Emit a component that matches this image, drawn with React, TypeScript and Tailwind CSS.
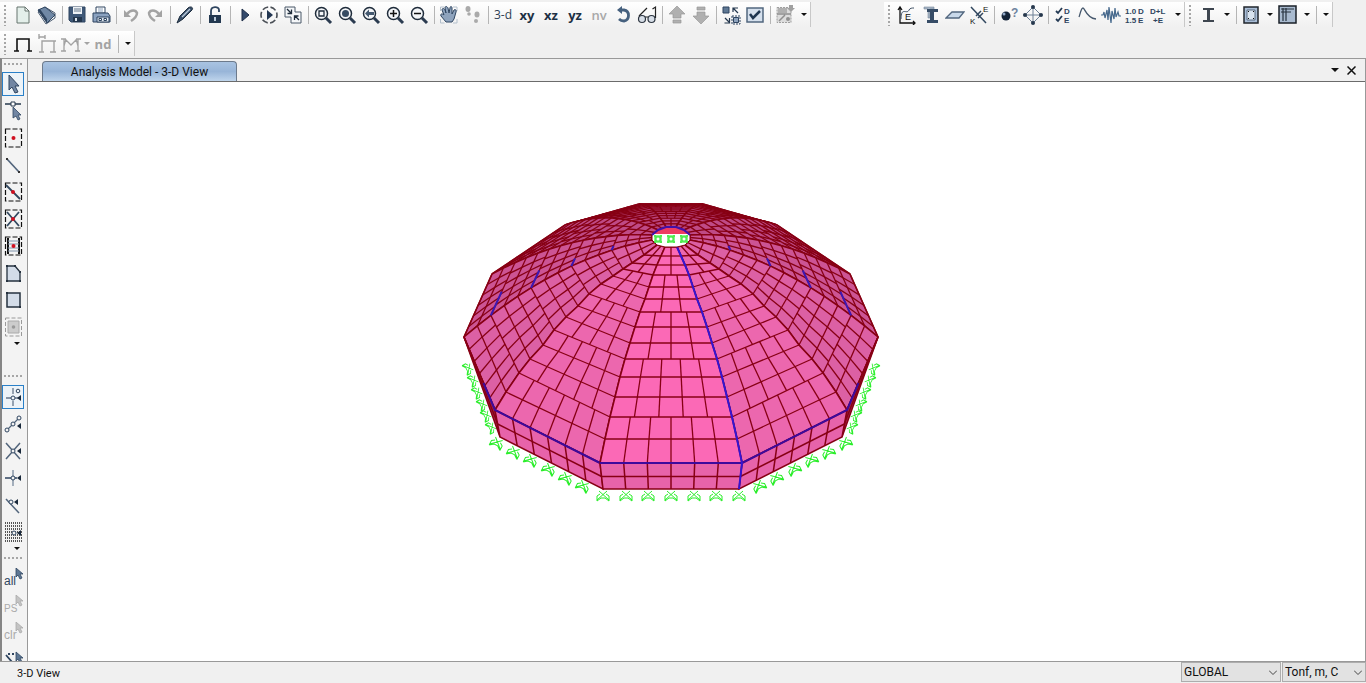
import { clsx } from "clsx";
import type { ReactNode } from "react";

const NAVY = "#2f4560";
const STEEL = "#8ea3bd";
const GRAY = "#a3a3a3";

const magnifier = (inner: ReactNode) => (
  <>
    <path d="M13 13l5 5" stroke="#2b3b50" strokeWidth="3" />
    <circle cx="8.5" cy="8.5" r="6" fill="#f4f6f9" stroke="#1f2c3b" strokeWidth="1.5" />
    {inner}
  </>
);

const pointer = (x: number, y: number, fill: string) => (
  <path d={`M${x} ${y}v9l2-2 2 4 2-1-2-4h3z`} fill={fill} stroke={fill === "#c4c4c4" ? "#aaa" : NAVY} strokeWidth="0.8" />
);

const dashedBox = (
  <rect x="2.5" y="1" width="16" height="18" stroke="#111" strokeWidth="1.2" strokeDasharray="5 2" />
);

const icons: Record<string, ReactNode> = {
  new: (
    <path d="M4 2h8l4 4v12H4zM12 2v4h4" fill="#e4efea" stroke="#66756f" />
  ),
  open: (
    <>
      <path d="M8 2l10 6v5l-9 6-8-12z" fill="#fff" stroke="#45566c" />
      <path d="M8 2l10 8-8 8L1 5z" fill="#7088a5" stroke={NAVY} />
      <path d="M1 5l9 13v-4L3 4z" fill={NAVY} />
    </>
  ),
  save: (
    <>
      <path d="M2 2h16v15H4l-2-2z" fill="#3f5878" stroke={NAVY} />
      <path d="M6 2h9v7H6z" fill="#eef2f6" />
      <path d="M7 4h7M7 6h7" stroke="#66788c" />
      <path d="M6 12h9v5H6z" fill="#23364d" />
      <path d="M8 13h2v3H8z" fill="#dde4ec" />
    </>
  ),
  print: (
    <>
      <path d="M5 2h9v6H5z" fill="#fff" stroke={NAVY} />
      <path d="M7 4h5M7 6h5" stroke={STEEL} />
      <path d="M2 8h15l2 3v6H2z" fill="#8ba2c0" stroke={NAVY} />
      <path d="M6 12h12v5H6z" fill="#dfe7f0" stroke={NAVY} />
      <path d="M8 13.500h2.500v2H8zM13 13.500h2.500v2H13z" fill="#fff" stroke={NAVY} />
    </>
  ),
  undo: (
    <>
      <path d="M6 9c4-5 9-4 10-1 0 4-3 6-6 8" stroke={GRAY} strokeWidth="2.500" />
      <path d="M3 5v7h7z" fill={GRAY} />
    </>
  ),
  redo: (
    <>
      <path d="M14 9C10 4 5 5 4 8c0 4 3 6 6 8" stroke={GRAY} strokeWidth="2.500" />
      <path d="M17 5v7h-7z" fill={GRAY} />
    </>
  ),
  pen: (
    <>
      <path d="M2 18L5 11 13 3c2-2 6-1 4 2l-9 9z" fill="#384e68" stroke="#1d2c3d" />
      <path d="M7 12l8-8" stroke="#b8c8da" strokeWidth="1.5" />
    </>
  ),
  lock: (
    <>
      <path d="M6 10V6c0-5 8-5 8-1v2" stroke={NAVY} strokeWidth="1.8" />
      <path d="M4 10h12v8H4z" fill="#233850" />
      <path d="M10 12v4" stroke="#b9c8d8" strokeWidth="2" />
    </>
  ),
  play: <path d="M7 4l7 6-7 6z" fill="#33496b" stroke="#1f2f48" />,
  playRing: (
    <>
      <circle cx="10" cy="10" r="8" stroke="#4a4f56" strokeWidth="1.6" strokeDasharray="6 2.400" strokeDashoffset="3" />
      <path d="M8 5l6 5-6 5z" fill="#233752" />
    </>
  ),
  shrink: (
    <>
      <path d="M2 2h10v5h6v11H8v-6H2z" stroke="#4a5868" fill="#f5f7f9" />
      <path d="M4 4l4 4M8.500 4.500v4h-4M16 15l-4-4M11.500 15v-4h4" stroke="#1f2c3b" strokeWidth="1.3" />
    </>
  ),
  zoomBox: magnifier(<path d="M6 6h5v5H6z" stroke="#1f2c3b" strokeWidth="1.3" />),
  zoomAll: magnifier(<circle cx="8.500" cy="8.500" r="3.500" fill="#364b62" />),
  zoomPrev: magnifier(<path d="M4 8.500l4-4v2.500h5v3H8v2.500z" fill="#43586f" />),
  zoomIn: magnifier(<path d="M5 8.500h7M8.500 5v7" stroke="#111" strokeWidth="1.500" />),
  zoomOut: magnifier(<path d="M5 8.500h7" stroke="#111" strokeWidth="1.500" />),
  pan: (
    <>
      <path d="M1.500 6V2h4M14 2h4v4M18 14v4h-4M5.500 18h-4v-4" stroke="#b4c0cc" />
      <path d="M7 17L2 11c-1-2 1-3 3-1L3 5c0-2 2-2 3 0l1 3-1-5c0-2 2-2 3 0l1 5 1-5c0-2 2-2 2 0v6l2-4c1-1 3 0 2 2l-2 7-2 3z" fill={STEEL} stroke={NAVY} />
    </>
  ),
  walk: (
    <g fill="#aaa">
      <ellipse cx="5" cy="4" rx="2.500" ry="3" />
      <circle cx="6" cy="9" r="1.800" />
      <ellipse cx="14" cy="9.500" rx="2.500" ry="3" />
      <circle cx="13" cy="16" r="2" />
    </g>
  ),
  rotate: (
    <>
      <path d="M8 5h3c6 1 6 10 0 11-2 0-4-1-5-2" stroke="#45607e" strokeWidth="2.800" />
      <path d="M4 5l5-4v8z" fill="#45607e" />
    </>
  ),
  glasses: (
    <>
      <path d="M2 11L10 3M18.500 13V2l-3 2M8 12h3" stroke="#222" strokeWidth="1.200" />
      <circle cx="5" cy="14" r="3.500" fill="#d7dee7" stroke="#2c3540" strokeWidth="1.200" />
      <circle cx="14.500" cy="14" r="3.500" fill="#d7dee7" stroke="#2c3540" strokeWidth="1.200" />
    </>
  ),
  up: <path d="M10 1l8 8h-4v4H6V9H2zM6 15h8v3H6z" fill="#b0b0b0" stroke="#999" strokeWidth=".7" />,
  down: <path d="M10 19l8-8h-4V7H6v4H2zM6 2h8v3H6z" fill="#b0b0b0" stroke="#999" strokeWidth=".7" />,
  swap: (
    <>
      <path d="M2 2h6v6H2z" fill="#5f7894" stroke={NAVY} />
      <path d="M12.500 12.500h5v5h-5z" fill={STEEL} stroke={NAVY} />
      <path d="M17 8l-5-5M12 7V3h5M4 13l4 4M8.500 13v5h-5" stroke="#23364d" strokeWidth="1.200" />
      <path d="M11 11h8v8h-8z" stroke={NAVY} strokeDasharray="2 1" />
    </>
  ),
  check: (
    <>
      <path d="M2 3h16v14H2z" fill="#d5e0ed" stroke="#52677f" strokeWidth="1.500" />
      <path d="M5 9l3 4 7-7" stroke="#1e3550" strokeWidth="2.500" />
    </>
  ),
  assign: (
    <>
      <path d="M2 2.500h14v15H2z" fill="#dcdcdc" stroke="#a0a0a0" strokeDasharray="2 1" />
      <path d="M3 3h9v5H3z" fill="#b0b0b0" />
      <path d="M2 9h14M4 16l6-6" stroke="#8f8f8f" strokeWidth="1.500" />
      <path d="M12 3h8l-4 4zM14 0h4v3h-4z" fill="#a0a0a0" />
      <circle cx="13" cy="14" r="2" fill="#909090" />
    </>
  ),
  modulus: (
    <>
      <path d="M3 3v15h15M1 5l2-3 2 3M16 16l2 2-2 2" stroke="#111" strokeWidth="1.300" />
      <path d="M4 14c0-13 6-4 8-9 1-2 3-2 5-2" stroke="#3f5064" />
      <text x="8" y="15" fontSize="9" fill="#111">E</text>
    </>
  ),
  section: (
    <>
      <path d="M3 2h10v2H9v9H7V4H3z" fill="#a9b7c7" stroke="#75869a" strokeWidth=".6" />
      <path d="M6 4h11v3h-4v8h4v3H6v-3h3V7H6z" fill="#364c66" />
    </>
  ),
  slab: <path d="M1 13l6-6h12l-5 6z" fill="#c9d9ea" stroke="#52677f" strokeWidth="1.300" />,
  link: (
    <>
      <path d="M2 2l15 16M7 11l5-5M9 13l5-5" stroke="#32485f" strokeWidth="1.500" />
      <text x="14" y="7" fontSize="8" fill="#111">E</text>
      <text x="1" y="19" fontSize="8" fill="#111">K</text>
    </>
  ),
  jointQ: (
    <>
      <circle cx="7" cy="11" r="4.500" fill="#142438" />
      <circle cx="5" cy="9" r="1.500" fill="#91a9c8" />
      <text x="12" y="12" fontSize="12" fontWeight="bold" fill="#6f84a0">?</text>
    </>
  ),
  nodes: (
    <>
      <path d="M10 2l8 8-8 8-8-8zM10 2v16M2 10h16" stroke="#6e8197" />
      <g fill="#26384d">
        <circle cx="10" cy="2" r="2" />
        <circle cx="18" cy="10" r="2" />
        <circle cx="10" cy="18" r="2" />
        <circle cx="2" cy="10" r="2" />
      </g>
    </>
  ),
  loadPattern: (
    <>
      <path d="M3 6l2 2 4-5M3 14l2 2 4-5" stroke="#243a54" strokeWidth="1.800" />
      <text x="11" y="9" fontSize="8" fontWeight="bold" fill={NAVY}>D</text>
      <text x="11" y="18" fontSize="8" fontWeight="bold" fill={NAVY}>E</text>
    </>
  ),
  spectrum: <path d="M2 12c1-2 2-9 4-9s3 10 13 11" stroke="#45576c" strokeWidth="1.300" />,
  history: <path d="M0 10h2l1-3 1 6 2-8 1 10 1-13 2 16 1-12 2 8 1-11 1 9 2-5 1 4h3" stroke="#45688c" strokeWidth="1.200" />,
  cases: (
    <g fontSize="8" fontWeight="bold" fill={NAVY}>
      <text x="0" y="9">1.0</text>
      <text x="13" y="9">D</text>
      <text x="0" y="18">1.5</text>
      <text x="13" y="18">E</text>
    </g>
  ),
  combos: (
    <g fontSize="8" fontWeight="bold" fill={NAVY}>
      <text x="1" y="9">D+L</text>
      <text x="4" y="18">+E</text>
    </g>
  ),
  beam: <path d="M5 3h11v2h-4v10h4v2H5v-2h4V5H5z" fill="#3e4650" />,
  column: (
    <>
      <path d="M3 2h14v16H3z" fill="#a9bdd6" stroke="#20262d" strokeWidth="1.500" />
      <path d="M6 5h8v10H6z" fill="#d8e3ef" stroke="#45566c" strokeWidth=".8" />
      <path d="M7 6h1v1H7zM12 6h1v1h-1zM7 13h1v1H7zM12 13h1v1h-1z" fill="#111" />
    </>
  ),
  table: (
    <>
      <path d="M1 1h17v17H1z" fill="#a8bacf" stroke="#1a2028" strokeWidth="1.500" />
      <path d="M3 4h13M3 7h10M5 3v13M8 3v13" stroke="#26323f" strokeWidth="1.200" />
    </>
  ),
  frame: <path d="M4 17V5h12v12M1 17h5M14 17h5" stroke="#111" strokeWidth="1.600" />,
  frameLoad: <path d="M2 0v5M2 3h6M8 1v4M5 18V7h12v11M2 18h5M13 18h6M5 7h14" stroke={GRAY} strokeWidth="1.400" />,
  frameShape: <path d="M0 5h5M15 5h5M3 5v12M17 5v12M4 5l6 6 6-6M0 17h5M14 17h5M5 5l-2 7M15 5l2 7" stroke={GRAY} strokeWidth="1.300" />,
  select: <path d="M6 1v15l3-3 3 6 3-1-3-6h4z" fill="#7186a3" stroke={NAVY} />,
  reshape: (
    <>
      <path d="M2 3h16" stroke="#26384d" strokeWidth="1.500" />
      <path d="M8 1h4v4H8z" fill="#fff" stroke="#26384d" />
      <path d="M10 6v11l3-2 2 4 2-1-2-4h3z" fill="#7186a3" stroke={NAVY} strokeWidth=".8" />
    </>
  ),
  point: (
    <>
      {dashedBox}
      <circle cx="10.500" cy="10" r="2" fill="#d01020" />
    </>
  ),
  line: (
    <>
      <path d="M4 4l12 13" stroke="#52657c" strokeWidth="1.700" />
      <path d="M3 3h2v2H3zM15 16h2v2h-2z" fill="#333" />
    </>
  ),
  quickLine: (
    <>
      {dashedBox}
      <path d="M3 3l14 14" stroke="#32485f" strokeWidth="1.800" />
      <circle cx="10" cy="10" r="2" fill="#d01020" />
    </>
  ),
  brace: (
    <>
      {dashedBox}
      <path d="M4 3l12 14M16 3L4 17" stroke="#32485f" strokeWidth="1.800" />
      <circle cx="10" cy="10" r="2" fill="#d01020" />
    </>
  ),
  secondary: (
    <>
      {dashedBox}
      <path d="M5 2v16M16 2v16" stroke="#111" strokeWidth="2" />
      <path d="M5 5h11M5 8h11M5 12h11M5 15h11" stroke="#8094ab" />
      <circle cx="10.500" cy="10" r="2" fill="#d01020" />
    </>
  ),
  poly: (
    <>
      <path d="M4 3h8l5 6v9H4z" fill="#d3dce8" stroke="#26323f" strokeWidth="1.300" />
      <path d="M3 2h2v2H3zM11 2h2v2h-2zM16 8h2v2h-2zM3 17h2v2H3zM16 17h2v2h-2z" fill="#26323f" />
    </>
  ),
  rect: (
    <>
      <path d="M4 3h13v14H4z" fill="#d3dce8" stroke="#26323f" strokeWidth="1.500" />
      <path d="M3 2h2v2H3zM16 16h2v2h-2z" fill="#26323f" />
    </>
  ),
  quickArea: (
    <>
      <rect x="2.500" y="1" width="16" height="18" stroke="#999" strokeDasharray="4 2" />
      <path d="M5 4h11v12H5z" fill="#ccc" stroke="#aaa" />
      <circle cx="10.500" cy="10" r="1.800" fill="#999" />
    </>
  ),
  snapPoint: (
    <>
      <path d="M10 1v6M10 14v5M3 11h5M12 11h3" stroke="#65768a" strokeWidth="1.300" />
      <circle cx="10" cy="11" r="2" stroke={NAVY} />
      <circle cx="15" cy="4" r="1.800" stroke={NAVY} />
      <path d="M18 8v6l-4-3z" fill="#18283b" />
    </>
  ),
  snapEnds: (
    <>
      <path d="M4 16L16 4" stroke="#52657c" strokeWidth="1.200" />
      <g fill="#f3f3f3" stroke={NAVY}>
        <circle cx="4" cy="16" r="2" />
        <circle cx="10" cy="10" r="2" />
        <circle cx="16" cy="4" r="2" />
      </g>
      <path d="M18 9v6l-4-3z" fill="#18283b" />
    </>
  ),
  snapCross: (
    <>
      <path d="M3 2l14 16M17 2L3 18" stroke="#52657c" strokeWidth="1.500" />
      <circle cx="10" cy="10" r="2" fill="#f3f3f3" stroke={NAVY} />
      <path d="M18 7v6l-4-3z" fill="#18283b" />
    </>
  ),
  snapPerp: (
    <>
      <path d="M10 2v16" stroke="#8997a8" strokeWidth="1.500" />
      <path d="M2 10h12" stroke={NAVY} strokeWidth="1.500" />
      <circle cx="10" cy="10" r="2" fill="#f3f3f3" stroke={NAVY} />
      <path d="M18 7v6l-4-3z" fill="#18283b" />
    </>
  ),
  snapLine: (
    <>
      <path d="M3 4l13 14" stroke="#52657c" strokeWidth="1.500" />
      <circle cx="8" cy="7" r="2" fill="#f3f3f3" stroke={NAVY} />
      <path d="M15 4v6l-4-3z" fill="#18283b" />
    </>
  ),
  snapGrid: (
    <>
      <path d="M2 1h17M2 4h17M2 7h17M2 10h17M2 13h17M2 16h17M2 19h17" stroke="#222" strokeWidth="1.300" strokeDasharray="1 1" />
      <circle cx="11" cy="11" r="2" fill="#f3f3f3" stroke={NAVY} />
      <path d="M18 8v6l-4-3z" fill="#18283b" />
    </>
  ),
  all: (
    <>
      <text x="1" y="17" fontSize="12" fill={NAVY}>all</text>
      {pointer(13, 0, "#5f7894")}
    </>
  ),
  ps: (
    <>
      <text x="1" y="17" fontSize="10" fill="#aaa">PS</text>
      {pointer(13, 0, "#c4c4c4")}
    </>
  ),
  clr: (
    <>
      <text x="1" y="17" fontSize="12" fill="#aaa">clr</text>
      {pointer(13, 0, "#c4c4c4")}
    </>
  ),
  selectLine: (
    <>
      <path d="M3 6l6 7M11 5H9M7 5H5" stroke={NAVY} strokeWidth="1.800" />
      {pointer(13, 3, "#5f7894")}
    </>
  ),
};

function Icon({ name }: { name: string }) {
  return (
    <svg viewBox="0 0 20 20" className="size-5 shrink-0 font-['Liberation_Sans',sans-serif]" fill="none" aria-hidden="true">
      {icons[name]}
    </svg>
  );
}

function Caret({ fill = "#111" }: { fill?: string }) {
  return (
    <svg viewBox="0 0 6 3" className="h-[3px] w-1.5" aria-hidden="true">
      <path d="M0 0h6L3 3z" fill={fill} />
    </svg>
  );
}

// A row or column of small square dots, used as a drag handle
function Grip({ vertical = false }: { vertical?: boolean }) {
  return vertical ? (
    <svg className="mr-px ml-1 h-[22px] w-1.5" aria-hidden="true">
      <line x1="1" y1="1" x2="1" y2="22" stroke="#a6a6a6" strokeWidth="2" strokeDasharray="2 2" />
    </svg>
  ) : (
    <svg className="h-[3px] w-full shrink-0" aria-hidden="true">
      <line x1="2" y1="1" x2="22" y2="1" stroke="#a6a6a6" strokeWidth="2" strokeDasharray="2 2" />
    </svg>
  );
}

const textTools: Record<string, string> = {
  "3-d": "text-[12px] text-[#2d3f55]",
  xy: "text-[13px] font-bold text-[#1e3145]",
  xz: "text-[13px] font-bold text-[#1e3145]",
  yz: "text-[13px] font-bold text-[#1e3145]",
  nv: "text-[13px] font-semibold text-[#a8a8a8]",
  nd: "text-[13px] font-bold text-[#a3a3a3]",
};

function Tool({ name }: { name: string }) {
  if (name === "|") {
    return <span className="flex w-1.5 justify-center"><span className="h-[18px] w-px bg-[#b5b5b5]" /></span>;
  }
  if (name === "v" || name === "v-disabled") {
    return (
      <button
        type="button"
        aria-label="More options"
        className={clsx("flex h-5 items-center justify-center", name === "v" ? "w-[13px]" : "w-2")}
      >
        <Caret fill={name === "v" ? "#111" : GRAY} />
      </button>
    );
  }
  return (
    <button type="button" aria-label={name} className="flex h-[22px] w-6 items-center justify-center">
      {name in textTools ? (
        <span className={clsx("font-['Open_Sans',sans-serif] leading-4 whitespace-nowrap", textTools[name])}>
          {name}
        </span>
      ) : (
        <Icon name={name} />
      )}
    </button>
  );
}

function ToolGroup({ tools }: { tools: string }) {
  return (
    <div role="toolbar" className="flex h-[25px] items-center border-r border-[#c8c8c8] bg-linear-to-b from-white to-[#f0f0f0]">
      <Grip vertical />
      {tools.split(" ").map((tool, i) => (
        <Tool key={i} name={tool} />
      ))}
    </div>
  );
}

function RailGroup({ tools, selected }: { tools: string[]; selected?: string }) {
  return (
    <div className="flex shrink-0 flex-col items-center">
      {tools.map((tool) => (
        <div key={tool} className="flex h-[27px] items-center">
          <button
            type="button"
            aria-label={tool}
            className={clsx(
              "flex h-6 w-[22px] items-center justify-center border",
              tool === selected ? "border-[#2a80c8] bg-[#edf3f8]" : "border-transparent",
            )}
          >
            <Icon name={tool} />
          </button>
        </div>
      ))}
    </div>
  );
}

type Point = [number, number];

const CENTER = 671;
const ROWS = 14;
const frontX = [6, 10, 14, 18, 22, 26, 31, 36, 41, 46, 51, 56, 61, 66, 71];
const frontY = [247, 256, 265, 275, 287, 299, 312, 327, 343, 359, 377, 397, 417, 439, 463];
const secondX = [14, 27, 39, 48, 58, 70, 82, 93, 105, 117, 128, 141, 152, 165, 176];
const secondY = [245, 255, 263, 269, 276, 284, 294, 306, 317, 330, 345, 359, 373, 392, 410];

const lerp = (a: Point, b: Point, t: number): Point => [
  a[0] + (b[0] - a[0]) * t,
  a[1] + (b[1] - a[1]) * t,
];
const curve = (fn: (t: number) => Point) =>
  Array.from({ length: ROWS + 1 }, (_, i) => fn(i / ROWS));

// Half of the ridges, front to back, as offsets from the dome's axis
const ridges: Point[][] = [
  frontX.map((x, i) => [x, frontY[i]] as Point),
  secondX.map((x, i) => [x, secondY[i]] as Point),
  curve((t) => [19 + 188 * t, 240 + 34 * t + 63 * t * t]),
  curve((t) => [19 + 160 * t, 235 - 8 * t + 47 * t * t]),
  curve((t) => [13 + 93 * t, 230 - 43 * t + 38 * t * t]),
  curve((t) => [5 + 27 * t, 204 + 23 * (1 - t) * (1 - t)]),
];

const base: Point[] = [[68, 489], [171, 437], [198, 366]];

const place = ([x, y]: Point, side: number): Point => [CENTER + side * x, y];
const poly = (pts: Point[]) => pts.map((p) => p.map((n) => Math.round(n * 10) / 10).join(",")).join(" ");

// The mesh gets one more division across each panel every three rows
const divisions = (row: number) => Math.min(6, 2 + Math.floor(row / 3));

function Panel({ a, b, fill }: { a: Point[]; b: Point[]; fill: string }) {
  const lines: ReactNode[] = [];
  for (let row = 0; row < ROWS; row++) {
    const n = divisions(row);
    lines.push(<polyline key={`r${row}`} points={poly([a[row + 1], b[row + 1]])} />);
    for (let k = 1; k < n; k++) {
      lines.push(
        <polyline key={`${row}-${k}`} points={poly([lerp(a[row], b[row], k / n), lerp(a[row + 1], b[row + 1], k / n)])} />,
      );
    }
  }
  return (
    <g stroke="#870014" strokeWidth="1.3">
      <polygon points={poly([...a, ...[...b].reverse()])} fill={fill} strokeWidth="1.6" />
      {lines}
    </g>
  );
}

function Wall({ top, bottom }: { top: [Point, Point]; bottom: [Point, Point] }) {
  return (
    <g stroke="#870014" strokeWidth="1.5">
      <polygon points={poly([top[0], top[1], bottom[1], bottom[0]])} fill="#e763aa" />
      <polyline points={poly([lerp(top[0], bottom[0], 0.52), lerp(top[1], bottom[1], 0.52)])} />
      {[1, 2, 3, 4, 5].map((k) => (
        <polyline key={k} points={poly([lerp(top[0], top[1], k / 6), lerp(bottom[0], bottom[1], k / 6)])} />
      ))}
    </g>
  );
}

interface SupportsProps {
  from: Point;
  to: Point;
  angle: number;
  scale?: string;
  skip?: number;
}

function Supports({ from, to, angle, scale = "1 1", skip = 0 }: SupportsProps) {
  return (
    <g stroke="#2bee2b">
      {Array.from({ length: 7 - skip }, (_, i) => {
        const [x, y] = lerp(from, to, (i + skip) / 6);
        return (
          <path
            key={i}
            transform={`translate(${Math.round(x)} ${Math.round(y)}) rotate(${angle}) scale(${scale})`}
            d="M-4 2L6 11M4 2L-6 11M-6 12V7l3-2M6 12V7L3 5M-6 12l4-3h4l4 3"
          />
        );
      })}
    </g>
  );
}

const panelFills = ["#ec67ae", "#dc60a4", "#cc5494", "#bf4a86", "#b8437c"];

function DomeModel() {
  const sides = [-1, 1];
  const front = sides.map((s) => ridges[0].map((p) => place(p, s)));
  const back = sides.map((s) => ridges[5].map((p) => place(p, s)));
  const ring = [
    ...ridges.map((r) => place(r[0], 1)),
    ...[...ridges].reverse().map((r) => place(r[0], -1)),
  ];

  return (
    <svg viewBox="28 82 1337 579" className="size-full" fill="none" role="img" aria-label="Dome shell model">
      <Supports from={place(base[0], -1)} to={place(base[0], 1)} angle={0} />
      {sides.map((s) => (
        <g key={s}>
          <Supports from={place(base[0], s)} to={place(base[1], s)} angle={s * -27} skip={1} />
          <Supports from={place(base[1], s)} to={place(base[2], s)} angle={s * -62} scale="0.9 0.8" skip={1} />
        </g>
      ))}
      <Panel a={back[0]} b={back[1]} fill="#b8437c" />
      {[4, 3, 2, 1, 0].map((i) =>
        sides.map((s) => (
          <Panel
            key={`${i}${s}`}
            a={ridges[i].map((p) => place(p, s))}
            b={ridges[i + 1].map((p) => place(p, s))}
            fill={panelFills[i]}
          />
        )),
      )}
      <Panel a={front[0]} b={front[1]} fill="#fb69b6" />

      {sides.map((s) => {
        const eave = [0, 1, 2].map((i) => place(ridges[i][ROWS], s));
        const foot = base.map((p) => place(p, s));
        return (
          <g key={s}>
            <polygon points={poly([eave[1], eave[2], foot[1]])} fill="#a3234e" stroke="#870014" strokeWidth="1.500" />
            <polyline points={poly([lerp(eave[1], foot[1], 0.5), eave[2]])} stroke="#870014" strokeWidth="1.500" />
            <Wall top={[eave[0], eave[1]]} bottom={[foot[0], foot[1]]} />
            <polyline points={poly([eave[0], eave[1], lerp(eave[1], eave[2], 0.37)])} stroke="#3d0a9c" strokeWidth="2" />
            {[3, 6, 9, 12].map((row) => (
              <polyline
                key={row}
                points={poly([
                  place(ridges[2][row], s),
                  place(lerp(ridges[2][row], ridges[3][row], row > 8 ? 0.45 : 0.3), s),
                ])}
                stroke="#3c18b4"
                strokeWidth="2"
              />
            ))}
          </g>
        );
      })}
      <Wall top={[front[0][ROWS], front[1][ROWS]]} bottom={[place(base[0], -1), place(base[0], 1)]} />
      <polyline points={poly([front[0][ROWS], front[1][ROWS]])} stroke="#3d0a9c" strokeWidth="2" />
      <polyline points={poly([...front[1], place(base[0], 1)])} stroke="#3515d2" strokeWidth="2" />

      <polygon points={poly(ring)} fill="#fff" stroke="#870014" />
      <polygon points="652,234 658,230 666,227 676,227 684,230 690,234" fill="#ee3c62" />
      <polyline points="652,235 658,230 666,227 676,227 684,230 690,235" stroke="#4310a8" strokeWidth="2" />
      {[658, 671, 684].map((x) => (
        <path
          key={x}
          transform={`translate(${x} 239)`}
          d="M-3-4v8M3-4v8M-4-3h8M-4 3h8M-2-2h4v4h-4z"
          stroke="#19e619"
        />
      ))}
    </svg>
  );
}

function StatusSelect({ label, value, width }: { label: string; value: string; width: string }) {
  return (
    <div className={clsx("relative h-full", width)}>
      <select
        aria-label={label}
        defaultValue={value}
        className="block h-5 w-full appearance-none border border-[#adadad] bg-[#e2e2e2] pl-[2px] font-['Roboto',sans-serif] text-[12px] leading-4 text-[#111]"
      >
        <option>{value}</option>
      </select>
      <svg viewBox="0 0 8 5" className="pointer-events-none absolute top-2 right-1 h-[5px] w-2" fill="none">
        <path d="M0 .5l4 4 4-4" stroke="#444" />
      </svg>
    </div>
  );
}

export default function App() {
  return (
    <div className="flex h-screen flex-col overflow-hidden bg-[#f0f0f0] font-['Liberation_Sans',Arial,sans-serif] text-[#111]">
      <header className="flex h-[58px] shrink-0 flex-col gap-1 pt-0.5">
        <div className="flex justify-between pr-[33px]">
          <ToolGroup tools="new open | save print | undo redo | pen | lock | play playRing shrink | zoomBox zoomAll zoomPrev zoomIn zoomOut | pan walk | 3-d xy xz yz nv rotate glasses | up down | swap check | assign v" />
          <div className="flex">
            <ToolGroup tools="modulus section slab link | jointQ nodes | loadPattern spectrum history cases combos v" />
            <ToolGroup tools="beam v | column v table v | v" />
          </div>
        </div>
        <div className="flex">
          <ToolGroup tools="frame frameLoad frameShape v-disabled nd | v" />
        </div>
      </header>

      <div className="flex min-h-0 flex-1">
        <aside className="flex w-[27px] shrink-0 flex-col items-center overflow-hidden border-t border-l-2 border-t-[#999] border-l-[#858585] bg-[#f3f3f3] pt-1 pr-[3px]">
          <Grip />
          <div className="h-1 shrink-0" />
          <RailGroup
            selected="select"
            tools={["select", "reshape", "point", "line", "quickLine", "brace", "secondary", "poly", "rect", "quickArea"]}
          />
          <div className="flex h-[35px] shrink-0 justify-center pt-0.5 pl-2"><Caret /></div>
          <Grip />
          <div className="h-[5px] shrink-0" />
          <RailGroup
            selected="snapPoint"
            tools={["snapPoint", "snapEnds", "snapCross", "snapPerp", "snapLine", "snapGrid"]}
          />
          <div className="flex h-3 shrink-0 justify-center pt-0.5 pl-2"><Caret /></div>
          <Grip />
          <div className="h-1 shrink-0" />
          <RailGroup tools={["all", "ps", "clr", "selectLine"]} />
        </aside>

        <main className="flex min-w-0 flex-1 flex-col border border-b-0 border-[#999]">
          <div className="flex h-[23px] shrink-0 items-end justify-between border-b border-[#6b6b6b] pr-[9px] pl-3.5">
            <button
              type="button"
              className="h-5 w-[195px] rounded-t-[4px] border border-b-0 border-[#6c7a8c] bg-linear-to-b from-[#a9c3e2] via-[#98b5d8] to-[#bfd5ec] font-['Roboto',sans-serif] text-[12px] leading-[18px]"
            >
              Analysis Model - 3-D View
            </button>
            <div className="flex h-full items-center gap-2">
              <button type="button" aria-label="Window list" className="flex h-4 w-2 items-center">
                <svg viewBox="0 0 8 4" className="h-1 w-2"><path d="M0 0h8L4 4z" fill="#111" /></svg>
              </button>
              <button type="button" aria-label="Close view">
                <svg viewBox="0 0 9 9" className="size-[9px]"><path d="M.5.5l8 8M8.500.5l-8 8" stroke="#111" strokeWidth="1.500" /></svg>
              </button>
            </div>
          </div>
          <div className="min-h-0 flex-1 bg-white">
            <DomeModel />
          </div>
        </main>
      </div>

      <footer className="flex h-[22px] shrink-0 items-center justify-between border-t border-[#999] pl-[17px]">
        <span className="pt-1 font-['Roboto',sans-serif] text-[11px]">3-D View</span>
        <div className="flex h-full gap-px">
          <StatusSelect label="Coordinate system" value="GLOBAL" width="w-[100px]" />
          <StatusSelect label="Units" value="Tonf, m, C" width="w-[84px]" />
        </div>
      </footer>
    </div>
  );
}
